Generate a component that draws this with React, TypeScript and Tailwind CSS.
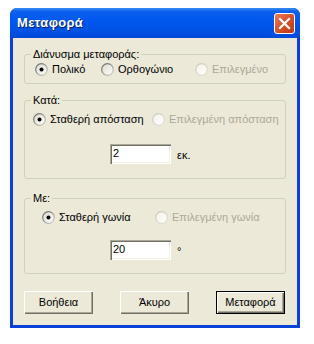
import React from "react";

const font = { fontFamily: '"Liberation Sans", Arial, sans-serif' };

function Radio({ checked = false, disabled = false }: { checked?: boolean; disabled?: boolean }) {
  const id = disabled ? "rd" : "re";
  return (
    <svg width="13" height="13" viewBox="0 0 13 13" className="shrink-0">
      <defs>
        <linearGradient id={id + "s"} x1="0" y1="0" x2="1" y2="1">
          <stop offset="0" stopColor={disabled ? "#c9c7ba" : "#5f5f5f"} />
          <stop offset="1" stopColor={disabled ? "#e4e2d8" : "#d8d6cc"} />
        </linearGradient>
        <linearGradient id={id + "f"} x1="0" y1="0" x2="1" y2="1">
          <stop offset="0" stopColor={disabled ? "#f2f0e8" : "#dcd9cc"} />
          <stop offset="1" stopColor="#ffffff" />
        </linearGradient>
      </defs>
      <circle cx="6.5" cy="6.5" r="5.8" fill={`url(#${id}f)`} stroke={`url(#${id}s)`} strokeWidth="1.2" />
      {checked && <circle cx="6.5" cy="6.5" r="2" fill="#000" />}
    </svg>
  );
}

function Option({
  label,
  checked,
  disabled,
  className = "",
}: {
  label: string;
  checked?: boolean;
  disabled?: boolean;
  className?: string;
}) {
  return (
    <div className={`flex items-center gap-[4px] ${className}`}>
      <Radio checked={checked} disabled={disabled} />
      <span className={`whitespace-nowrap leading-[13px] ${disabled ? "text-[#aca899]" : "text-black"}`}>{label}</span>
    </div>
  );
}

function Group({ title, className = "", children }: { title: string; className?: string; children: React.ReactNode }) {
  return (
    <div className={`mx-[11px] border border-[#d0d0bf] rounded-[3px] flex flex-col ${className}`}>
      <span className="-mt-[7px] ml-[6px] w-fit px-[2px] bg-[#ece9d8] leading-[13px]">{title}</span>
      {children}
    </div>
  );
}

function Field({ value, unit }: { value: string; unit: string }) {
  return (
    <div className="flex items-start ml-[85px]">
      <div className="w-[61px] h-[20px] bg-white pl-[3px] pt-[3px] leading-[13px] shadow-[inset_1px_1px_#aca899,inset_2px_2px_#716f64,inset_-1px_-1px_#fff,inset_-2px_-2px_#f1efe2]">
        {value}
      </div>
      <span className="ml-[6px] mt-[5px] leading-[13px]">{unit}</span>
    </div>
  );
}

function Button({ label, primary }: { label: string; primary?: boolean }) {
  return (
    <button
      className={`w-[69px] h-[23px] bg-[#ece9d8] leading-[13px] text-black ${
        primary
          ? "border border-black shadow-[inset_1px_1px_#fff,inset_-1px_-1px_#716f64,inset_-2px_-2px_#aca899]"
          : "shadow-[inset_1px_1px_#fff,inset_-1px_-1px_#716f64,inset_-2px_-2px_#aca899]"
      }`}
    >
      {label}
    </button>
  );
}

export default function App() {
  return (
    <div className="w-[314px] h-[344px] bg-white pt-[8px] pl-[10px] text-[11px]" style={font}>
      <div className="w-[290px] h-[320px] rounded-t-[7px] bg-[#0842d8] flex flex-col overflow-hidden">
        <div className="h-[30px] shrink-0 flex items-center pl-[7px] pr-[5px] bg-[linear-gradient(#3a8cf7_0%,#0a5fee_12%,#0058ee_40%,#0052e4_75%,#0048d8_100%)]">
          <span className="text-white font-bold text-[13px] tracking-[0.3px] [text-shadow:1px_1px_#0a1e6a] flex-1">Μεταφορά</span>
          <div className="w-[21px] h-[21px] rounded-[3px] border border-white bg-[linear-gradient(135deg,#e97a55,#d24a25_60%,#b83a18)] flex items-center justify-center">
            <svg width="13" height="13" viewBox="0 0 13 13">
              <path d="M2 2 L11 11 M11 2 L2 11" stroke="#fff" strokeWidth="2.2" strokeLinecap="square" />
            </svg>
          </div>
        </div>
        <div className="flex-1 mx-[3px] mb-[3px] bg-[#ece9d8] flex flex-col pt-[16px] text-black">
          <Group title="Διάνυσμα μεταφοράς:" className="h-[30px]">
            <div className="flex mt-[2px] ml-[10px]">
              <Option label="Πολικό" checked className="w-[66px]" />
              <Option label="Ορθογώνιο" className="w-[94px]" />
              <Option label="Επιλεγμένο" disabled />
            </div>
          </Group>
          <Group title="Κατά:" className="h-[79px] mt-[16px]">
            <div className="flex mt-[6px] ml-[8px]">
              <Option label="Σταθερή απόσταση" checked className="w-[119px]" />
              <Option label="Επιλεγμένη απόσταση" disabled />
            </div>
            <div className="mt-[18px]">
              <Field value="2" unit="εκ." />
            </div>
          </Group>
          <Group title="Με:" className="h-[76px] mt-[19px]">
            <div className="flex mt-[6px] ml-[17px]">
              <Option label="Σταθερή γωνία" checked className="w-[113px]" />
              <Option label="Επιλεγμένη γωνία" disabled />
            </div>
            <div className="mt-[16px]">
              <Field value="20" unit="°" />
            </div>
          </Group>
          <div className="flex gap-[27px] pl-[11px] mt-[17px]">
            <Button label="Βοήθεια" />
            <Button label="Άκυρο" />
            <Button label="Μεταφορά" primary />
          </div>
        </div>
      </div>
    </div>
  );
}
